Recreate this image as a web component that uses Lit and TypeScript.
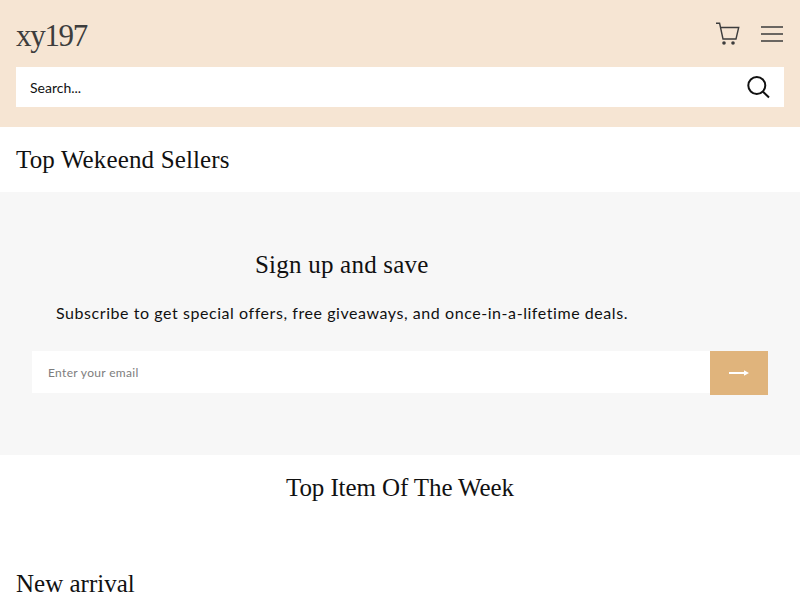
import { LitElement, html, css } from "lit";
import { customElement } from "lit/decorators.js";

@customElement("app-root")
export class AppRoot extends LitElement {
  static styles = css`
    :host { display: block; height: 600px; overflow: hidden; background: #fff; font-family: "Lato", "Noto Sans", sans-serif; color: #000; }
    .serif { font-family: "Liberation Serif", serif; font-weight: 400; margin: 0; }
    header { background: #f6e5d3; padding: 16px 16px 20px; display: flex; flex-direction: column; gap: 11px; }
    .top { display: flex; align-items: center; justify-content: space-between; height: 40px; }
    .logo { font-size: 31px; line-height: 40px; color: #3d3d3d; letter-spacing: -1.3px; }
    .icons { display: flex; align-items: center; gap: 20px; padding-bottom: 4px; }
    svg { display: block; }
    .search { background: #fff; height: 40px; display: flex; align-items: center; justify-content: space-between; padding: 0 14px; font-size: 14px; color: #111; }
    .h { font-size: 25px; line-height: 32px; color: #111; }
    .sp1 { letter-spacing: 0.14px; }
    .sp2 { letter-spacing: 0.22px; }
    .sp3 { letter-spacing: -0.1px; }
    .sp4 { letter-spacing: 0px; }
    .sellers { padding: 17px 16px 16px; }
    .signup { background: #f7f7f7; height: 263px; box-sizing: border-box; padding: 57px 32px 0; }
    .signup h2 { text-align: left; margin-left: 223px; }
    .sub { margin: 20px 0 0 24px; font-size: 16px; line-height: 24px; letter-spacing: 0.56px; color: #111; }
    .form { display: flex; margin-top: 26px; align-items: flex-start; }
    .email { flex: 1; height: 42px; background: #fff; display: flex; align-items: center; padding-left: 16px; font-size: 12px; letter-spacing: 0.33px; color: #7d7d7d; }
    .go { width: 58px; height: 44px; background: #e0b47c; display: flex; align-items: center; justify-content: center; }
    .week { text-align: center; padding-top: 17px; }
    .new { padding: 64px 16px 0; }
  `;
  render() {
    return html`
      <header>
        <div class="top">
          <div class="serif logo">xy197</div>
          <div class="icons">
            <svg width="24" height="24" viewBox="0 0 24 24" fill="none" stroke="#3d3d3d" stroke-width="1.4">
              <path d="M0 1.3H3.6L7 17H20L22.7 5.5H4.8"/>
              <circle cx="8" cy="21" r="1.8" fill="#3d3d3d" stroke="none"/>
              <circle cx="17" cy="21" r="1.8" fill="#3d3d3d" stroke="none"/>
            </svg>
            <svg width="24" height="24" viewBox="0 0 24 24" fill="none" stroke="#3d3d3d" stroke-width="1.4">
              <path d="M1 5H23M1 12H23M1 19H23"/>
            </svg>
          </div>
        </div>
        <div class="search">
          <span>Search...</span>
          <svg width="24" height="24" viewBox="0 0 24 24" fill="none" stroke="#111" stroke-width="2">
            <circle cx="10.8" cy="10.5" r="8.5"/>
            <path d="M17 16.7L23 22.5"/>
          </svg>
        </div>
      </header>
      <div class="sellers"><h2 class="serif h sp1">Top Wekeend Sellers</h2></div>
      <section class="signup">
        <h2 class="serif h sp2">Sign up and save</h2>
        <p class="sub">Subscribe to get special offers, free giveaways, and once-in-a-lifetime deals.</p>
        <div class="form">
          <div class="email">Enter your email</div>
          <div class="go">
            <svg width="20" height="8" viewBox="0 0 20 8"><path d="M0 3H15V1.2L20 4L15 6.8V5H0Z" fill="#fff"/></svg>
          </div>
        </div>
      </section>
      <div class="week"><h2 class="serif h sp3">Top Item Of The Week</h2></div>
      <div class="new"><h2 class="serif h sp4">New arrival</h2></div>
    `;
  }
}
